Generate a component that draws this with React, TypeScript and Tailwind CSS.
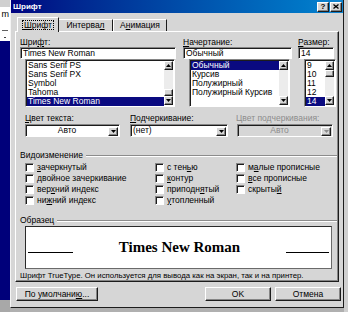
import React from "react";

const raised =
  "border border-t-white border-l-white border-r-[#1c1c1c] border-b-[#1c1c1c] shadow-[inset_-1px_-1px_0_#858585]";
const sunken =
  "border border-t-[#858585] border-l-[#858585] border-r-white border-b-white shadow-[inset_1px_1px_0_#1c1c1c]";
const txt = "text-[8.5px] leading-[9px] whitespace-nowrap";

function Arrow({ up, gray }: { up?: boolean; gray?: boolean }) {
  const c = gray ? "#8c8c8c" : "#000";
  return (
    <svg width="5" height="3" viewBox="0 0 5 3" className="block">
      {up ? <polygon points="2.5,0 5,3 0,3" fill={c} /> : <polygon points="0,0 5,0 2.5,3" fill={c} />}
    </svg>
  );
}

function SBtn({ up, gray }: { up?: boolean; gray?: boolean }) {
  return (
    <div className={`w-[9px] h-[9px] shrink-0 bg-[#d6d6d6] flex items-center justify-center ${raised}`}>
      <Arrow up={up} gray={gray} />
    </div>
  );
}

function VScroll({ thumb }: { thumb: "top" | "bottom" | "none" }) {
  return (
    <div className="w-[9px] h-full shrink-0 flex flex-col bg-[#ececec]">
      <SBtn up />
      <div className="flex-1 flex flex-col">
        {thumb === "bottom" && <div className="flex-1" />}
        {thumb !== "none" && <div className={`h-[7px] bg-[#d6d6d6] ${raised}`} />}
      </div>
      <SBtn />
    </div>
  );
}

function ListBox({
  items,
  sel,
  w,
  thumb,
}: {
  items: string[];
  sel: number;
  w: string;
  thumb: "top" | "bottom" | "none";
}) {
  return (
    <div className={`${w} h-[48px] bg-white flex ${sunken}`}>
      <div className="flex-1 flex flex-col pt-[1px] pl-[1px] overflow-hidden">
        {items.map((it, i) => (
          <div
            key={it}
            className={`h-[9px] pl-[1px] ${txt} ${i === sel ? "bg-[#0a0a80] text-white" : "text-black"}`}
          >
            {it}
          </div>
        ))}
      </div>
      <div className="py-[1px] pr-[1px] h-full">
        <VScroll thumb={thumb} />
      </div>
    </div>
  );
}

function Combo({
  w,
  text,
  center,
  disabled,
}: {
  w: string;
  text: string;
  center?: boolean;
  disabled?: boolean;
}) {
  return (
    <div className={`${w} h-[13px] flex items-center ${sunken} ${disabled ? "bg-[#d6d6d6]" : "bg-white"}`}>
      <div
        className={`flex-1 ${txt} ${center ? "text-center" : "pl-[2px]"} ${
          disabled ? "text-[#8c8c8c]" : "text-black"
        }`}
      >
        {text}
      </div>
      <div className="pr-[1px] pt-[1px]">
        <div className={`w-[10px] h-[9px] bg-[#d6d6d6] flex items-center justify-center ${raised}`}>
          <Arrow gray={disabled} />
        </div>
      </div>
    </div>
  );
}

function Check({ children, w }: { children: React.ReactNode; w?: string }) {
  return (
    <div className={`flex items-center ${w ?? ""}`}>
      <div className={`w-[9px] h-[9px] shrink-0 bg-white ${sunken}`} />
      <div className={`ml-[3px] ${txt}`}>{children}</div>
    </div>
  );
}

function Etched() {
  return <div className="flex-1 ml-[3px] mr-[1px] h-[2px] border-t border-t-[#8c8c8c] border-b border-b-white" />;
}

function Btn({ w, children, ml }: { w: string; children: React.ReactNode; ml: string }) {
  return (
    <div className={`${w} ${ml} h-[14px] bg-[#d6d6d6] flex items-center justify-center ${txt} ${raised}`}>
      {children}
    </div>
  );
}

export default function App() {
  return (
    <div className="w-[348px] h-[312px] flex overflow-hidden bg-[#b0b0b0] font-['Liberation_Sans',Arial,sans-serif] text-black">
      {/* background window strip */}
      <div className="w-[10px] h-full flex flex-col shrink-0">
        <div className="h-[7px] bg-[#d0d0d0]" />
        <div className="h-[34px] bg-white flex flex-col overflow-hidden">
          <div className="h-[14px] flex justify-end items-center overflow-hidden text-[9px] leading-[9px] pr-[1px]">
            m
          </div>
          <div className="h-[1px] w-[6px] ml-[2px] mt-[9px] bg-[#606060]" />
          <div className="h-[1px] w-[2px] ml-[4px] mt-[6px] bg-[#404040]" />
        </div>
        <div className="flex-1 bg-[#00007a]" />
        <div className="h-[12px] bg-[#a8a8a8]" />
      </div>

      {/* dialog */}
      <div className="w-[334px] h-[308px] shrink-0 bg-[#d6d6d6] border-l border-l-[#f4f4f4] border-r border-r-[#1c1c1c] border-b border-b-[#1c1c1c] flex flex-col">
        {/* title bar */}
        <div className="h-[13px] bg-linear-to-r from-[#000080] to-[#1084d0] flex items-center pl-[2px] pr-[1px]">
          <span className="text-white font-bold text-[8px] leading-[9px]">Шрифт</span>
          <div className="flex-1" />
          <div
            className={`w-[12px] h-[10px] bg-[#d6d6d6] flex items-center justify-center text-[8px] font-bold leading-none ${raised}`}
          >
            ?
          </div>
          <div className={`ml-[1px] w-[12px] h-[10px] bg-[#d6d6d6] flex items-center justify-center ${raised}`}>
            <svg width="6" height="5" viewBox="0 0 6 5" className="block">
              <path d="M0.5 0.5 L5.5 4.5 M5.5 0.5 L0.5 4.5" stroke="#000" strokeWidth="1.3" />
            </svg>
          </div>
        </div>

        {/* tabs */}
        <div className="flex items-end h-[14px] mt-[4px] pl-[6px]">
          <div className="relative z-10 w-[42px] h-[15px] mb-[-1px] bg-[#d6d6d6] border-t border-l border-r border-t-white border-l-white border-r-[#1c1c1c] flex items-center justify-center">
            <span className="border border-dotted border-black px-[1px] text-[8.5px] leading-[8px] whitespace-nowrap">
              <u>Ш</u>рифт
            </span>
          </div>
          <div className="w-[54px] h-[12px] border-t border-r border-t-white border-r-[#1c1c1c] flex items-center justify-center">
            <span className={txt}>
              Интерва<u>л</u>
            </span>
          </div>
          <div className="w-[54px] h-[12px] border-t border-l border-r border-t-white border-l-white border-r-[#1c1c1c] flex items-center justify-center">
            <span className={txt}>
              А<u>н</u>имация
            </span>
          </div>
        </div>

        {/* panel */}
        <div className="ml-[4px] w-[324px] h-[251px] border border-t-white border-l-white border-r-[#1c1c1c] border-b-[#1c1c1c] shadow-[inset_-1px_-1px_0_#858585] flex flex-col pl-[4px] pt-[6px]">
          {/* labels */}
          <div className={`flex h-[9px] ${txt}`}>
            <div className="w-[163px]">
              Шри<u>ф</u>т:
            </div>
            <div className="w-[115px]">
              <u>Н</u>ачертание:
            </div>
            <div>
              <u>Р</u>азмер:
            </div>
          </div>
          {/* inputs */}
          <div className="flex h-[12px]">
            <div className={`w-[156px] h-[12px] bg-white pl-[2px] flex items-center ${txt} ${sunken}`}>
              Times New Roman
            </div>
            <div className={`ml-[7px] w-[109px] h-[12px] bg-white pl-[2px] flex items-center ${txt} ${sunken}`}>
              Обычный
            </div>
            <div className={`ml-[6px] w-[36px] h-[12px] bg-white pl-[2px] flex items-center ${txt} ${sunken}`}>
              14
            </div>
          </div>
          {/* lists */}
          <div className="flex h-[48px]">
            <div className="ml-[5px]">
              <ListBox
                w="w-[150px]"
                items={["Sans Serif PS", "Sans Serif PX", "Symbol", "Tahoma", "Times New Roman"]}
                sel={4}
                thumb="bottom"
              />
            </div>
            <div className="ml-[14px]">
              <ListBox
                w="w-[101px]"
                items={["Обычный", "Курсив", "Полужирный", "Полужирный Курсив"]}
                sel={0}
                thumb="none"
              />
            </div>
            <div className="ml-[14px]">
              <ListBox w="w-[32px]" items={["9", "10", "11", "12", "14"]} sel={4} thumb="top" />
            </div>
          </div>
          {/* combo labels */}
          <div className={`flex h-[9px] mt-[7px] pl-[5px] ${txt}`}>
            <div className="w-[105px]">
              <u>Ц</u>вет текста:
            </div>
            <div className="w-[106px]">
              <u>П</u>одчеркивание:
            </div>
            <div className="text-[#8c8c8c]">Цвет подчеркивания:</div>
          </div>
          {/* combos */}
          <div className="flex h-[13px] mt-[1px] pl-[5px]">
            <Combo w="w-[95px]" text="Авто" center />
            <div className="ml-[10px]">
              <Combo w="w-[98px]" text="(нет)" />
            </div>
            <div className="ml-[9px]">
              <Combo w="w-[96px]" text="Авто" center disabled />
            </div>
          </div>
          {/* effects */}
          <div className="flex items-center h-[9px] mt-[14px]">
            <span className={txt}>Видоизменение</span>
            <Etched />
          </div>
          <div className="flex mt-[2px] pl-[5px]">
            <div className="w-[130px] flex flex-col">
              <div className="h-[11px] flex items-center">
                <Check>
                  <u>з</u>ачеркнутый
                </Check>
              </div>
              <div className="h-[11px] flex items-center">
                <Check>
                  <u>д</u>войное зачеркивание
                </Check>
              </div>
              <div className="h-[11px] flex items-center">
                <Check>
                  вер<u>х</u>ний индекс
                </Check>
              </div>
              <div className="h-[11px] flex items-center">
                <Check>
                  ни<u>ж</u>ний индекс
                </Check>
              </div>
            </div>
            <div className="w-[81px] flex flex-col">
              <div className="h-[11px] flex items-center">
                <Check>
                  с тен<u>ь</u>ю
                </Check>
              </div>
              <div className="h-[11px] flex items-center">
                <Check>
                  <u>к</u>онтур
                </Check>
              </div>
              <div className="h-[11px] flex items-center">
                <Check>
                  приподн<u>я</u>тый
                </Check>
              </div>
              <div className="h-[11px] flex items-center">
                <Check>
                  <u>у</u>топленный
                </Check>
              </div>
            </div>
            <div className="flex flex-col">
              <div className="h-[11px] flex items-center">
                <Check>
                  м<u>а</u>лые прописные
                </Check>
              </div>
              <div className="h-[11px] flex items-center">
                <Check>
                  <u>в</u>се прописные
                </Check>
              </div>
              <div className="h-[11px] flex items-center">
                <Check>
                  скрыты<u>й</u>
                </Check>
              </div>
            </div>
          </div>
          {/* sample */}
          <div className="flex items-center h-[9px] mt-[10px]">
            <span className={txt}>Образец</span>
            <Etched />
          </div>
          <div className="ml-[5px] mt-[1px] w-[307px] h-[43px] bg-white border border-t-[#2a2a2a] border-l-[#2a2a2a] border-r-[#6a6a6a] border-b-[#6a6a6a] flex items-center justify-between px-[2px]">
            <div className="w-[45px] h-px bg-black mt-[9px]" />
            <span className="font-['Liberation_Serif','Times_New_Roman',serif] font-bold text-[15px] leading-[15px] whitespace-nowrap">
              Times New Roman
            </span>
            <div className="w-[43px] h-px bg-black mt-[9px]" />
          </div>
          <div className="mt-[2px] h-[9px] text-[7.8px] leading-[9px] whitespace-nowrap">
            Шрифт TrueType. Он используется для вывода как на экран, так и на принтер.
          </div>
        </div>

        {/* buttons */}
        <div className="flex mt-[5px]">
          <Btn w="w-[82px]" ml="ml-[5px]">
            По умолчани<u>ю</u>...
          </Btn>
          <Btn w="w-[66px]" ml="ml-[107px]">
            OK
          </Btn>
          <Btn w="w-[66px]" ml="ml-[4px]">
            Отмена
          </Btn>
        </div>
      </div>
      <div className="flex-1 bg-[#cfcfcf]" />
    </div>
  );
}
